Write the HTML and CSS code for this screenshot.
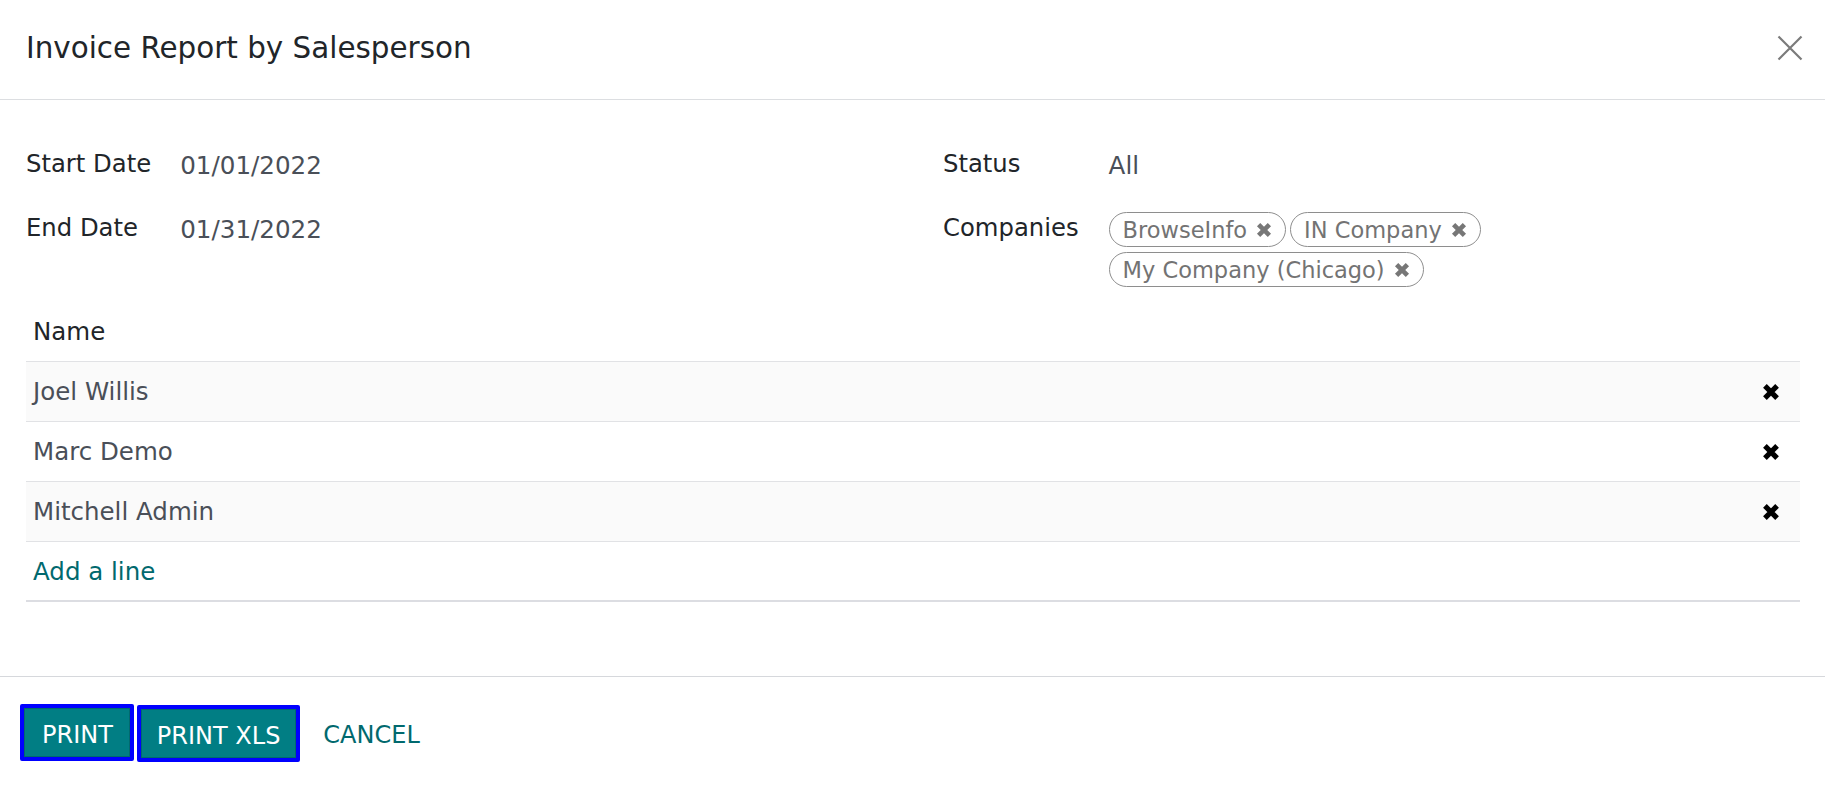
FILE: index.html
```html
<!DOCTYPE html>
<html lang="en">
<head>
<meta charset="utf-8">
<title>Invoice Report by Salesperson</title>
<link rel="stylesheet" href="styles.css">
</head>
<body>
<div class="modal">
  <header class="modal-header">
    <h4 class="modal-title">Invoice Report by Salesperson</h4>
    <button class="close" type="button" aria-label="Close">
      <svg width="26" height="26" viewBox="0 0 26 26"><path d="M1.5 1.5 L24.5 24.5 M24.5 1.5 L1.5 24.5" stroke="currentColor" stroke-width="2.2" fill="none"/></svg>
    </button>
  </header>

  <main class="modal-body">
    <div class="fields">
      <div class="group group-left">
        <div class="label">Start Date</div>
        <div class="value">01/01/2022</div>
        <div class="label">End Date</div>
        <div class="value">01/31/2022</div>
      </div>
      <div class="group group-right">
        <div class="label">Status</div>
        <div class="value">All</div>
        <div class="label">Companies</div>
        <div class="tags">
          <span class="tag">BrowseInfo<svg class="tag-x" viewBox="0 0 16 16"><path d="M2.6 2.6 L13.4 13.4 M13.4 2.6 L2.6 13.4" stroke="currentColor" stroke-width="4.6" fill="none"/></svg></span>
          <span class="tag">IN Company<svg class="tag-x" viewBox="0 0 16 16"><path d="M2.6 2.6 L13.4 13.4 M13.4 2.6 L2.6 13.4" stroke="currentColor" stroke-width="4.6" fill="none"/></svg></span>
          <span class="tag">My Company (Chicago)<svg class="tag-x" viewBox="0 0 16 16"><path d="M2.6 2.6 L13.4 13.4 M13.4 2.6 L2.6 13.4" stroke="currentColor" stroke-width="4.6" fill="none"/></svg></span>
        </div>
      </div>
    </div>

    <div class="lines">
      <div class="line line-head">Name</div>
      <div class="line line-odd"><span class="name">Joel Willis</span><svg class="del" viewBox="0 0 16 16"><path d="M2.6 2.6 L13.4 13.4 M13.4 2.6 L2.6 13.4" stroke="currentColor" stroke-width="4.6" fill="none"/></svg></div>
      <div class="line"><span class="name">Marc Demo</span><svg class="del" viewBox="0 0 16 16"><path d="M2.6 2.6 L13.4 13.4 M13.4 2.6 L2.6 13.4" stroke="currentColor" stroke-width="4.6" fill="none"/></svg></div>
      <div class="line line-odd"><span class="name">Mitchell Admin</span><svg class="del" viewBox="0 0 16 16"><path d="M2.6 2.6 L13.4 13.4 M13.4 2.6 L2.6 13.4" stroke="currentColor" stroke-width="4.6" fill="none"/></svg></div>
      <div class="line line-add"><a class="add-line" href="#">Add a line</a></div>
    </div>
  </main>

  <footer class="modal-footer">
    <button class="btn btn-primary btn-print" type="button">PRINT</button>
    <button class="btn btn-primary btn-xls" type="button">PRINT XLS</button>
    <button class="btn btn-link" type="button">CANCEL</button>
  </footer>
</div>
</body>
</html>
```

FILE: styles.css
```css
* { box-sizing: border-box; }

html, body {
  margin: 0;
  padding: 0;
  background: #ffffff;
}

body {
  font-family: "DejaVu Sans", "Noto Sans", sans-serif;
  font-size: 24.3px;
  color: #212529;
}

.modal {
  width: 1825px;
  height: 788px;
  display: flex;
  flex-direction: column;
}

/* Header */
.modal-header {
  height: 100px;
  flex: none;
  display: flex;
  align-items: center;
  justify-content: space-between;
  padding: 0 22px 3px 26px;
  border-bottom: 1px solid #dcdee1;
}

.modal-title {
  margin: 0;
  font-size: 29.4px;
  font-weight: normal;
  line-height: 40px;
  color: #212529;
}

.close {
  border: 0;
  background: transparent;
  padding: 0;
  width: 26px;
  height: 26px;
  color: #7b7b7b;
  display: flex;
}

/* Body */
.modal-body {
  flex: 1;
  padding: 46px 25px 0 26px;
}

.fields {
  display: grid;
  grid-template-columns: 917px 1fr;
  align-items: start;
}

.group {
  display: grid;
  grid-template-columns: auto 1fr;
  row-gap: 26px;
  align-items: start;
  align-content: start;
}

.group-left { column-gap: 29px; }
.group-right { column-gap: 30px; }

.label {
  line-height: 36px;
  color: #212529;
}

.value {
  line-height: 36px;
  padding-top: 2px;
  font-size: 24.6px;
  color: #4a4f58;
}

.tags {
  display: flex;
  flex-wrap: wrap;
  gap: 5px 4px;
  padding-top: 2px;
  max-width: 380px;
}

.tag {
  display: inline-flex;
  align-items: center;
  height: 35px;
  padding: 0 13px 0 13px;
  border: 1px solid #8e8e8e;
  border-radius: 18px;
  font-size: 22.5px;
  color: #737373;
  white-space: nowrap;
}

.tag-x {
  width: 16px;
  height: 16px;
  margin-left: 9px;
  color: #777777;
}

/* Lines list */
.lines {
  margin-top: 15px;
}

.line {
  height: 60px;
  display: flex;
  align-items: center;
  justify-content: space-between;
  padding: 0 20px 0 7px;
  border-bottom: 1px solid #e1e2e5;
  color: #4a4f58;
  font-size: 24.5px;
}

.line-head {
  color: #212529;
}

.line-odd {
  background: #fafafa;
}

.line-add {
  border-bottom: 2px solid #dcdde2;
}

.del {
  width: 18px;
  height: 18px;
  color: #000000;
}

.add-line {
  color: #01696e;
  text-decoration: none;
}

/* Footer */
.modal-footer {
  flex: none;
  height: 112px;
  border-top: 1px solid #d6d8dc;
  display: flex;
  align-items: flex-start;
  padding: 27px 20px 0 20px;
}

.btn {
  font-family: "DejaVu Sans", "Noto Sans", sans-serif;
  font-size: 24px;
  height: 57px;
  display: inline-flex;
  align-items: center;
  line-height: 1;
  padding: 5px 16px 0 16px;
  border: 4px solid transparent;
  border-radius: 2px;
  background: transparent;
  cursor: pointer;
}

.btn-primary {
  background: #017e84;
  color: #ffffff;
  border-color: #0000ff;
  box-shadow: inset 0 0 0 1px #01696e;
  margin-right: 3px;
}

.btn-print {
  padding-left: 18px;
  padding-right: 17px;
}

.btn-xls {
  margin-top: 1px;
}

.btn-link {
  color: #01696e;
  padding-left: 16px;
}
```
